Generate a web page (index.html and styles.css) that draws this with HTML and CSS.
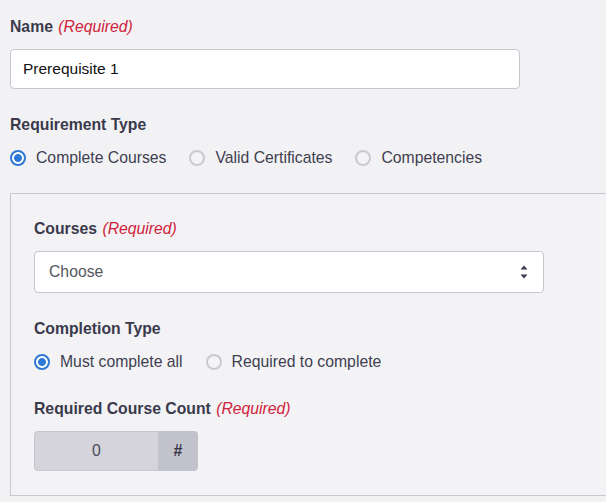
FILE: index.html
```html
<!DOCTYPE html>
<html lang="en">
<head>
  <meta charset="UTF-8">
  <meta name="viewport" content="width=device-width, initial-scale=1.0">
  <title>Prerequisite</title>
  <link rel="stylesheet" href="styles.css">
</head>
<body>
<div class="page">

  <!-- Name -->
  <div class="field">
    <label class="field-label" for="name">Name <em class="required">(Required)</em></label>
    <input class="text-input" id="name" type="text" value="Prerequisite 1">
  </div>

  <!-- Requirement type -->
  <div class="field">
    <div class="field-label">Requirement Type</div>
    <div class="radio-row">
      <label class="radio"><input type="radio" name="req-type" checked> Complete Courses</label>
      <label class="radio"><input type="radio" name="req-type"> Valid Certificates</label>
      <label class="radio"><input type="radio" name="req-type"> Competencies</label>
    </div>
  </div>

  <!-- Courses panel -->
  <div class="panel">
    <div class="field">
      <div class="field-label">Courses <em class="required">(Required)</em></div>
      <div class="select">
        <span class="select-text">Choose</span>
        <svg class="select-arrows" width="8" height="14" viewBox="0 0 8 14">
          <path d="M4 0.5 L7.5 4.5 L0.5 4.5 Z" fill="#3c3c50"/>
          <path d="M4 13.5 L7.5 9.5 L0.5 9.5 Z" fill="#3c3c50"/>
        </svg>
      </div>
    </div>

    <div class="field">
      <div class="field-label">Completion Type</div>
      <div class="radio-row">
        <label class="radio"><input type="radio" name="comp-type" checked> Must complete all</label>
        <label class="radio"><input type="radio" name="comp-type"> Required to complete</label>
      </div>
    </div>

    <div class="field last">
      <div class="field-label">Required Course Count <em class="required">(Required)</em></div>
      <div class="input-group">
        <input class="count-input" type="text" value="0" disabled>
        <span class="addon">#</span>
      </div>
    </div>
  </div>

</div>
</body>
</html>
```

FILE: styles.css
```css
html, body {
  margin: 0;
  overflow: hidden;
}
body {
  font-family: "Liberation Sans", Arial, sans-serif;
  background-color: #f2f2f5;
  color: #3c3c4e;
}
.page {
  padding: 15px 10px 0 10px;
}

/* Labels */
.field {
  margin-bottom: 24px;
}
.field.last {
  margin-bottom: 0;
}
.field-label {
  display: block;
  font-size: 15.75px;
  font-weight: bold;
  line-height: 20px;
  padding-top: 2px;
  margin-bottom: 12px;
  color: #3a3a4c;
}
.required {
  font-weight: normal;
  color: #d0233b;
  margin-left: 1px;
}

/* Text inputs */
.text-input {
  display: block;
  box-sizing: border-box;
  width: 510px;
  height: 40px;
  margin: 0;
  padding: 0 12px;
  border: 1px solid #c6c6d0;
  border-radius: 4px;
  background: #fff;
  font-family: inherit;
  font-size: 15.5px;
  color: #111;
}

/* Radios */
.radio-row {
  display: flex;
  gap: 23px;
  line-height: 22px;
}
.radio {
  display: flex;
  align-items: center;
  gap: 10px;
  font-size: 15.75px;
  color: #3f3f50;
}
.radio input {
  appearance: none;
  -webkit-appearance: none;
  box-sizing: border-box;
  width: 16px;
  height: 16px;
  margin: 0;
  border: 2px solid #c9c9d1;
  border-radius: 50%;
  background: #f4f4f7;
}
.radio input:checked {
  border-color: #2c7ad6;
  background: radial-gradient(circle, #2c7ad6 0 3.6px, #fff 4.2px);
}

/* Bordered panel, runs past the right edge */
.panel {
  width: 640px;
  margin-top: 24px;
  padding: 23px 23px 24px;
  border: 1px solid #c8c8d0;
  background-color: #f3f3f6;
}

/* Select */
.select {
  box-sizing: border-box;
  width: 510px;
  height: 42px;
  display: flex;
  align-items: center;
  justify-content: space-between;
  padding: 0 15px 0 14px;
  border: 1px solid #c6c6d0;
  border-radius: 4px;
  background: #fff;
}
.select-text {
  font-size: 15.75px;
  color: #555560;
}

/* Count input with addon */
.input-group {
  display: flex;
  width: 164px;
  height: 40px;
}
.count-input {
  box-sizing: border-box;
  width: 124px;
  height: 40px;
  margin: 0;
  border: 1px solid #c6c6ce;
  border-right: none;
  border-radius: 4px 0 0 4px;
  background: #d4d4da;
  text-align: center;
  font-family: inherit;
  font-size: 15.75px;
  color: #4a4a5a;
}
.addon {
  width: 40px;
  display: flex;
  align-items: center;
  justify-content: center;
  border-radius: 0 4px 4px 0;
  background: #c2c2cc;
  font-size: 16px;
  font-weight: bold;
  color: #363648;
}
```
